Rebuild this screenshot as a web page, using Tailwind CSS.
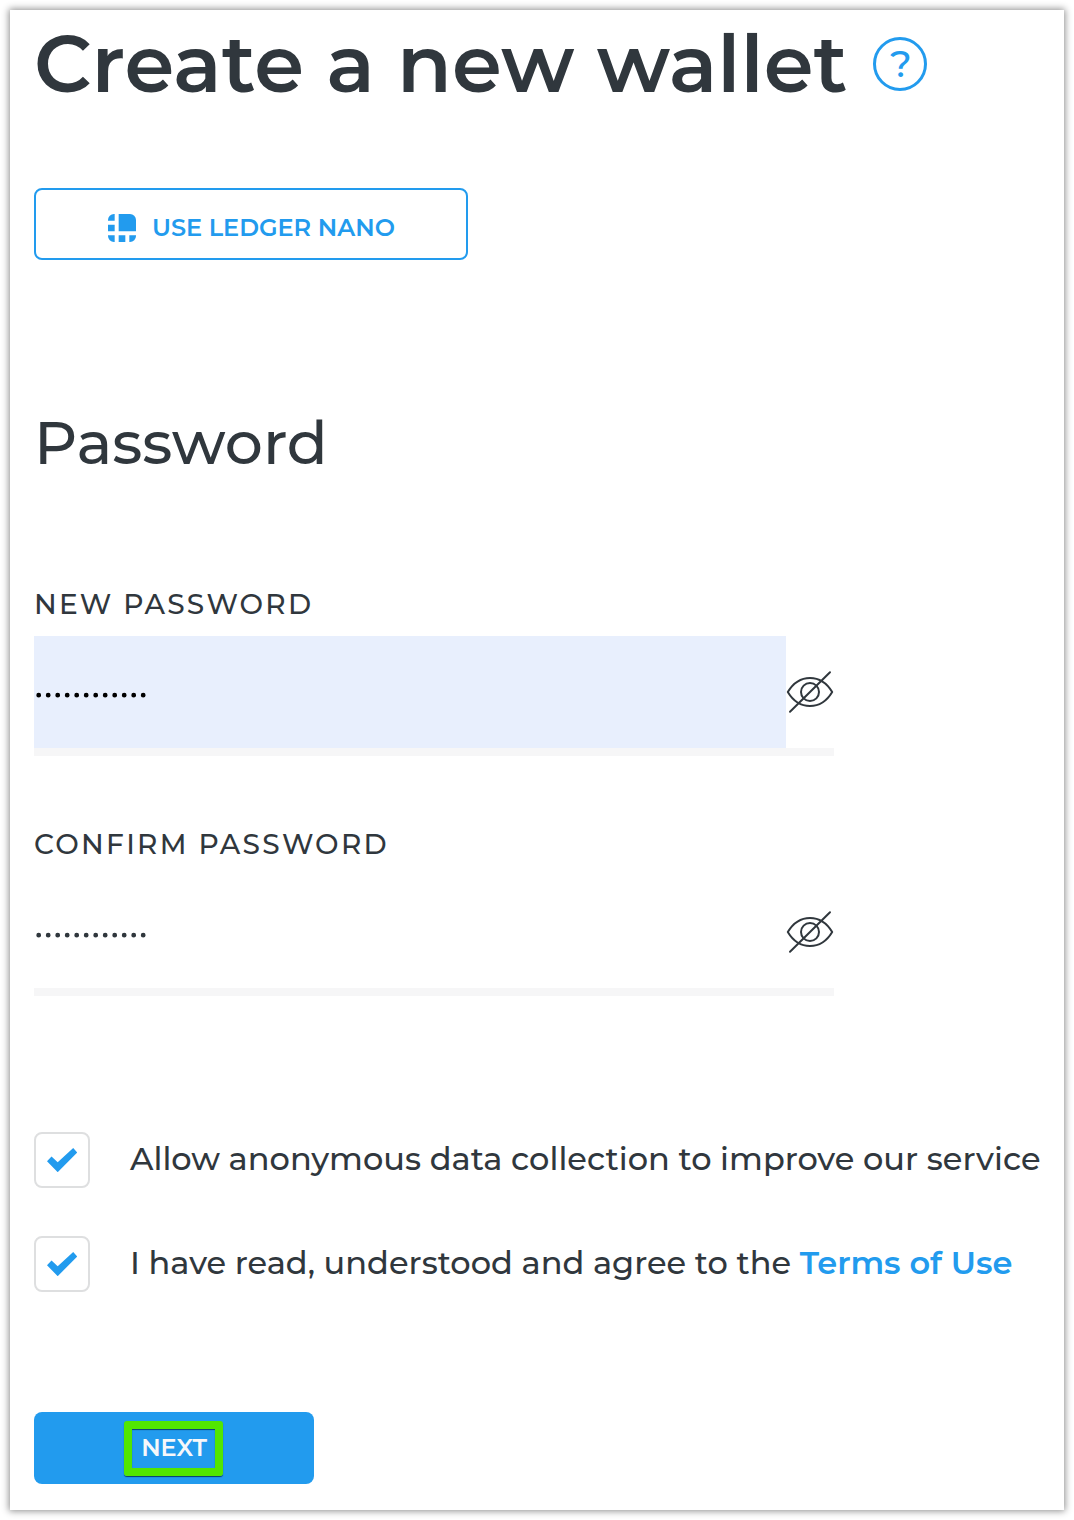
<!DOCTYPE html>
<html lang="en">
<head>
<meta charset="utf-8">
<title>Create a new wallet</title>
<script src="https://cdn.jsdelivr.net/npm/@tailwindcss/browser@4"></script>
</head>
<body class="bg-white p-[10px] font-['Montserrat','Inter',sans-serif] text-[#30373d]">
<main class="flex h-[1500px] w-[1054px] flex-col items-start bg-white px-6 pt-[14px] whitespace-nowrap shadow-[0_0_7px_1px_rgba(0,0,0,0.45)]">
  <header class="flex h-20 items-center">
    <h1 class="w-[839px] text-[80px] leading-[80px] font-semibold tracking-[0.08px]">Create a new wallet</h1>
    <button class="flex size-[54px] items-center justify-center rounded-full border-3 border-[#229bee] pl-[2px] text-[#229bee]" aria-label="Help">
      <span class="text-[38px] leading-[48px] font-medium">?</span>
    </button>
  </header>

  <button class="mt-[84px] flex h-[72px] w-[434px] items-center gap-4 rounded-lg border-2 border-[#229bee] pt-2 pl-[72px] text-2xl font-semibold text-[#229bee]">
    <svg class="size-7" viewBox="0 0 28 28" fill="currentColor">
      <path d="M10.670 0H22a6 6 0 0 1 6 6v11.330H10.670zM6.670 0v6.670H0V6a6 6 0 0 1 6-6zM0 10.670h6.670v6.660H0zM0 21.330h6.670V28H6a6 6 0 0 1-6-6zM10.670 21.330h6.660V28h-6.660zM21.330 21.330H28V22a6 6 0 0 1-6 6h-.67z"/>
    </svg>
    <span class="leading-7">USE LEDGER NANO</span>
  </button>

  <h2 class="mt-[153px] text-[60px] leading-[60px] font-medium">Password</h2>

  <label class="mt-[115px] text-[28px] leading-8 font-medium tracking-[2.24px]">NEW PASSWORD</label>
  <div class="mt-4 flex h-[120px] w-[800px] border-b-8 border-[#f6f6f7]">
    <div class="flex w-[752px] items-center bg-[#e8effd] pt-[6px] text-black">
      <svg class="h-2 w-[120px]" viewBox="0 0 120 8" fill="none" stroke="currentColor" stroke-width="4.800" stroke-linecap="round"><path d="M4.700 4.200h105" stroke-dasharray="0 9.500"/></svg>
    </div>
    <div class="flex w-12 items-center justify-center">
      <svg class="size-12" viewBox="0 0 48 48" fill="none" stroke="currentColor" stroke-width="2" stroke-linecap="round" stroke-linejoin="round"><path d="M1.800 24C13 5.300 35 5.300 46.200 24C35 42.700 13 42.700 1.800 24zM4 43.800L44 4.200"/><circle cx="24" cy="24" r="9"/></svg>
    </div>
  </div>

  <label class="mt-[72px] text-[28px] leading-8 font-medium tracking-[2.28px]">CONFIRM PASSWORD</label>
  <div class="mt-4 flex h-[120px] w-[800px] border-b-8 border-[#f6f6f7]">
    <div class="flex w-[752px] items-center pt-[6px]">
      <svg class="h-2 w-[120px]" viewBox="0 0 120 8" fill="none" stroke="currentColor" stroke-width="4.800" stroke-linecap="round"><path d="M4.700 4.200h105" stroke-dasharray="0 9.500"/></svg>
    </div>
    <div class="flex w-12 items-center justify-center">
      <svg class="size-12" viewBox="0 0 48 48" fill="none" stroke="currentColor" stroke-width="2" stroke-linecap="round" stroke-linejoin="round"><path d="M1.800 24C13 5.300 35 5.300 46.200 24C35 42.700 13 42.700 1.800 24zM4 43.800L44 4.200"/><circle cx="24" cy="24" r="9"/></svg>
    </div>
  </div>

  <div class="mt-[136px] flex h-14 items-center gap-10 text-[32px] font-medium">
    <span class="flex size-14 items-center justify-center rounded-lg border-2 border-[#dedfe0] text-[#229bee]">
      <svg class="h-6 w-[30px]" viewBox="0 0 30 24" fill="currentColor"><path d="M0 13.200L4.500 8.500L10.700 14.300L26.200 0L30.200 4.500L10.700 24.200z"/></svg>
    </span>
    <span class="pb-[2px] leading-10 tracking-[0.02px]">Allow anonymous data collection to improve our service</span>
  </div>
  <div class="mt-12 flex h-14 items-center gap-10 text-[32px] font-medium">
    <span class="flex size-14 items-center justify-center rounded-lg border-2 border-[#dedfe0] text-[#229bee]">
      <svg class="h-6 w-[30px]" viewBox="0 0 30 24" fill="currentColor"><path d="M0 13.200L4.500 8.500L10.700 14.300L26.200 0L30.200 4.500L10.700 24.200z"/></svg>
    </span>
    <span class="pb-[2px] leading-10 tracking-[0.015px]">I have read, understood and agree to the <a class="font-semibold text-[#229bee]">Terms of Use</a></span>
  </div>

  <button class="relative mt-[120px] flex h-[72px] w-[280px] items-center justify-center rounded-lg bg-[#229bee] text-2xl font-semibold text-[#f6f8fa]">
    NEXT
    <span class="absolute top-[9px] left-[90px] h-[55px] w-[99px] rounded-[3px] border-8 border-[#52e600] shadow-[0_1px_1px_rgba(0,30,60,0.75),inset_0_1px_1px_rgba(0,30,60,0.75)]"></span>
  </button>
</main>
</body>
</html>
